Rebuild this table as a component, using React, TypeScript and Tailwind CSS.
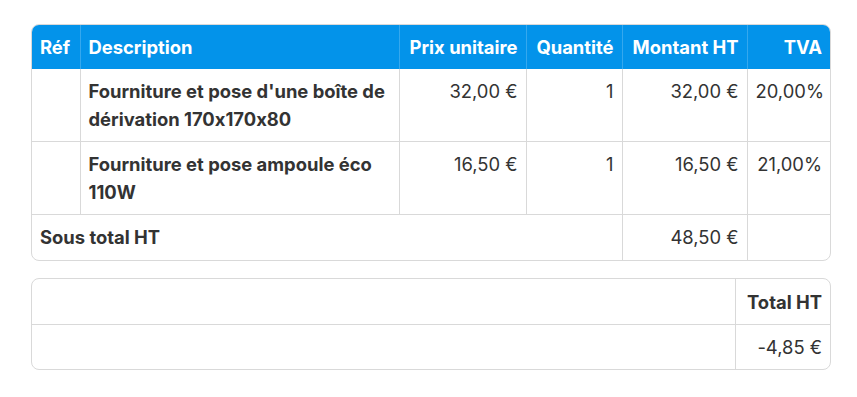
export default function App() {
  const lines = [
    { desc: "Fourniture et pose d'une boîte de dérivation 170x170x80", pu: "32,00 €", qty: "1", ht: "32,00 €", tva: "20,00%" },
    { desc: "Fourniture et pose ampoule éco 110W", pu: "16,50 €", qty: "1", ht: "16,50 €", tva: "21,00%" },
  ]

  return (
    <div
      className="min-h-screen bg-white px-[31px] pt-[24px] text-[18.4px] leading-[28px] text-[#333333] [font-feature-settings:'calt'_0]"
      style={{ fontFamily: "Inter, 'Liberation Sans', sans-serif" }}
    >
      {/* Lines table */}
      <div className="w-[800px] overflow-hidden rounded-[8px] border border-[#d9d9d9]">
        <table className="w-full table-fixed border-collapse">
          <colgroup>
            <col className="w-[48px]" />
            <col className="w-[319px]" />
            <col className="w-[127px]" />
            <col className="w-[96px]" />
            <col className="w-[125px]" />
            <col />
          </colgroup>
          <thead>
            <tr className="bg-[#0393ea] text-white">
              <th className="border-r border-white/20 px-[8px] py-[8px] text-left font-bold">Réf</th>
              <th className="border-r border-white/20 px-[8px] py-[8px] text-left font-bold">Description</th>
              <th className="border-r border-white/20 px-[8px] py-[8px] text-right font-bold">Prix unitaire</th>
              <th className="border-r border-white/20 px-[8px] py-[8px] text-right font-bold">Quantité</th>
              <th className="border-r border-white/20 px-[8px] py-[8px] text-right font-bold">Montant HT</th>
              <th className="px-[8px] py-[8px] text-right font-bold">TVA</th>
            </tr>
          </thead>
          <tbody>
            {lines.map((l, i) => (
              <tr key={i} className="border-b border-[#d9d9d9] align-top">
                <td className="border-r border-[#d9d9d9] px-[8px] py-[8px]"></td>
                <td className="border-r border-[#d9d9d9] px-[8px] py-[8px] font-bold">{l.desc}</td>
                <td className="border-r border-[#d9d9d9] px-[8px] py-[8px] text-right">{l.pu}</td>
                <td className="border-r border-[#d9d9d9] px-[8px] py-[8px] text-right">{l.qty}</td>
                <td className="border-r border-[#d9d9d9] px-[8px] py-[8px] text-right">{l.ht}</td>
                <td className="px-[8px] py-[8px] text-right">{l.tva}</td>
              </tr>
            ))}
            <tr>
              <td colSpan={4} className="border-r border-[#d9d9d9] px-[8px] pt-[8px] pb-[9px] font-bold">Sous total HT</td>
              <td className="border-r border-[#d9d9d9] px-[8px] pt-[8px] pb-[9px] text-right">48,50 €</td>
              <td className="px-[8px] pt-[8px] pb-[9px]"></td>
            </tr>
          </tbody>
        </table>
      </div>

      {/* Totals table */}
      <div className="mt-[17px] w-[800px] overflow-hidden rounded-[8px] border border-[#d9d9d9]">
        <table className="w-full table-fixed border-collapse">
          <colgroup>
            <col />
            <col className="w-[95px]" />
          </colgroup>
          <tbody>
            <tr className="border-b border-[#d9d9d9]">
              <td className="border-r border-[#d9d9d9] px-[8px] pt-[9px] pb-[8px]"></td>
              <td className="px-[8px] pt-[9px] pb-[8px] text-right font-bold">Total HT</td>
            </tr>
            <tr>
              <td className="border-r border-[#d9d9d9] px-[8px] pt-[8px] pb-[8px]"></td>
              <td className="px-[8px] pt-[8px] pb-[8px] text-right">-4,85 €</td>
            </tr>
          </tbody>
        </table>
      </div>
    </div>
  )
}
